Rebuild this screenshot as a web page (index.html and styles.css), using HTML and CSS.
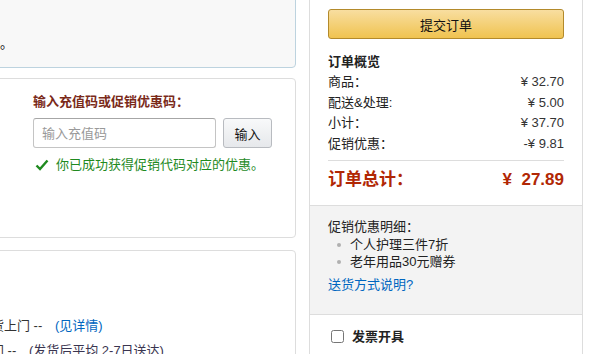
FILE: index.html
```html
<!DOCTYPE html>
<html lang="zh-CN">
<head>
    <meta charset="UTF-8">
    <title>结算 - 提交订单</title>
    <link rel="stylesheet" href="styles.css">
</head>
<body>
    <div class="page">
      <!-- Coluna esquerda: endereço, cupom e envio -->
      <div class="main-col">
        <div class="box box-address">
          <p class="address-note">请仔细核对您的收货地址信息。</p>
        </div>

        <div class="box box-promo">
          <div class="gift"></div>
          <div class="promo">
            <h4 class="promo-title">输入充值码或促销优惠码：</h4>
            <div class="promo-form">
              <input type="text" class="promo-input" placeholder="输入充值码">
              <button class="btn-small">输入</button>
            </div>
            <p class="promo-ok">
              <svg class="check" width="14" height="12" viewBox="0 0 14 12">
                <path d="M1.5 6.5 L5 10 L12.5 1.5" fill="none" stroke="#1f8a1f" stroke-width="2.4"/>
              </svg>
              你已成功获得促销代码对应的优惠。
            </p>
          </div>
        </div>

        <div class="box box-ship">
          <p class="ship-line">普通快递送货上门 -- <a href="#" class="ship-link">(见详情)</a></p>
          <p class="ship-line">加急送货上门 -- <span class="ship-note">(发货后平均 2-7日送达)</span></p>
        </div>
      </div>

      <!-- Coluna direita: resumo do pedido -->
      <div class="sidebar">
        <div class="side-top">
          <button class="btn-order">提交订单</button>

          <h3 class="summary-title">订单概览</h3>
          <div class="summary-row"><span>商品：</span><span>¥ 32.70</span></div>
          <div class="summary-row"><span>配送&amp;处理:</span><span>¥ 5.00</span></div>
          <div class="summary-row"><span>小计：</span><span>¥ 37.70</span></div>
          <div class="summary-row"><span>促销优惠：</span><span>-¥ 9.81</span></div>

          <div class="summary-total"><span>订单总计：</span><span>¥&nbsp; 27.89</span></div>
        </div>

        <div class="side-promo">
          <p class="promo-detail">促销优惠明细：</p>
          <ul class="promo-list">
            <li>个人护理三件7折</li>
            <li>老年用品30元赠券</li>
          </ul>
          <a href="#" class="ship-help">送货方式说明?</a>
        </div>

        <div class="side-invoice">
          <label class="invoice"><input type="checkbox" class="invoice-check"> 发票开具</label>
        </div>
      </div>
    </div>
</body>
</html>
```

FILE: styles.css
```css
/* Base da página */
body {
  margin: 0;
  font-family: "Liberation Sans", Arial, "Noto Sans CJK SC", sans-serif;
  font-size: 13px;
  color: #111;
  background: #fff;
  overflow: hidden;
}

.page {
  display: flex;
  align-items: flex-start;
  gap: 13px;
  margin-top: -20px;
}

/* Coluna principal (parte dela fica fora da tela) */
.main-col {
  width: 596px;
  margin-left: -300px;
  flex-shrink: 0;
}

.box {
  border: 1px solid #dddddd;
  border-radius: 4px;
  background: #fff;
}

.box-address {
  background: #f8f8f8;
  border-color: #bdd3df;
  padding: 53px 0 13px;
}

.address-note {
  width: 312px;
  margin: 0;
  line-height: 20px;
  text-align: right;
}

.box-promo {
  display: flex;
  gap: 20px;
  height: 158px;
  margin-top: 10px;
  padding-left: 12px;
}

.gift {
  width: 300px;
}

.promo-title {
  margin: 13px 0 6px;
  font-size: 13px;
  line-height: 20px;
  color: #7a2a1a;
}

.promo-form {
  display: flex;
  gap: 7px;
}

.promo-input {
  width: 183px;
  height: 30px;
  box-sizing: border-box;
  border: 1px solid #c4c4c4;
  border-top-color: #a6a6a6;
  border-radius: 3px;
  padding: 0 8px;
  font-family: inherit;
  font-size: 13px;
}

.promo-input::placeholder {
  color: #999;
}

.btn-small {
  width: 49px;
  height: 30px;
  border: 1px solid #b8bbc0;
  border-radius: 3px;
  background: linear-gradient(#f8f9fa, #e6e8eb);
  font-family: inherit;
  font-size: 13px;
  color: #111;
  padding: 0;
}

.promo-ok {
  display: flex;
  align-items: center;
  gap: 7px;
  margin: 7px 0 0 2px;
  line-height: 20px;
  color: #1f8a1f;
}

.box-ship {
  height: 140px;
  margin-top: 12px;
  padding: 62px 0 0 225px;
}

.ship-line {
  margin: 0;
  line-height: 25px;
  color: #333;
}

.ship-link {
  margin-left: 9px;
  color: #0066c0;
  text-decoration: none;
}

.ship-note {
  margin-left: 9px;
  color: #3a3550;
}

/* Barra lateral */
.sidebar {
  width: 272px;
  flex-shrink: 0;
  border-left: 1px solid #dddddd;
  border-right: 1px solid #dddddd;
}

.side-top {
  padding: 29px 18px 9px;
}

.btn-order {
  display: block;
  width: 100%;
  height: 30px;
  border: 1px solid #b38a2b;
  border-radius: 3px;
  background: linear-gradient(#f8dea0, #f0c350);
  font-family: inherit;
  font-size: 13px;
  color: #111;
}

.summary-title {
  margin: 13px 0 0;
  font-size: 13px;
  line-height: 20px;
  color: #222;
}

.summary-row {
  display: flex;
  justify-content: space-between;
  line-height: 20.5px;
  color: #222;
}

.summary-row span:last-child {
  color: #333;
}

.summary-total {
  display: flex;
  justify-content: space-between;
  margin-top: 6px;
  padding-top: 3px;
  border-top: 1px solid #dddddd;
  line-height: 32px;
  font-size: 17px;
  font-weight: bold;
  color: #b12704;
}

.side-promo {
  background: #f3f3f3;
  border-top: 1px solid #dddddd;
  border-bottom: 1px solid #dddddd;
  padding: 12px 18px 19px;
}

.promo-detail {
  margin: 0;
  line-height: 17.5px;
  color: #222;
}

.promo-list {
  list-style: none;
  margin: 0;
  padding: 0 0 0 22px;
  color: #222;
}

.promo-list li {
  position: relative;
  line-height: 17.5px;
}

.promo-list li::before {
  content: "";
  position: absolute;
  left: -13px;
  top: 7px;
  width: 4px;
  height: 4px;
  border-radius: 50%;
  background: #b0b0b0;
}

.ship-help {
  display: block;
  margin-top: 4px;
  line-height: 20px;
  color: #0066c0;
  text-decoration: none;
}

.side-invoice {
  padding: 12px 18px 20px;
}

.invoice {
  display: flex;
  align-items: center;
  gap: 8px;
  line-height: 20px;
  font-weight: bold;
  color: #222;
}

.invoice-check {
  width: 13px;
  height: 13px;
  margin: 0 0 0 3px;
}
```
